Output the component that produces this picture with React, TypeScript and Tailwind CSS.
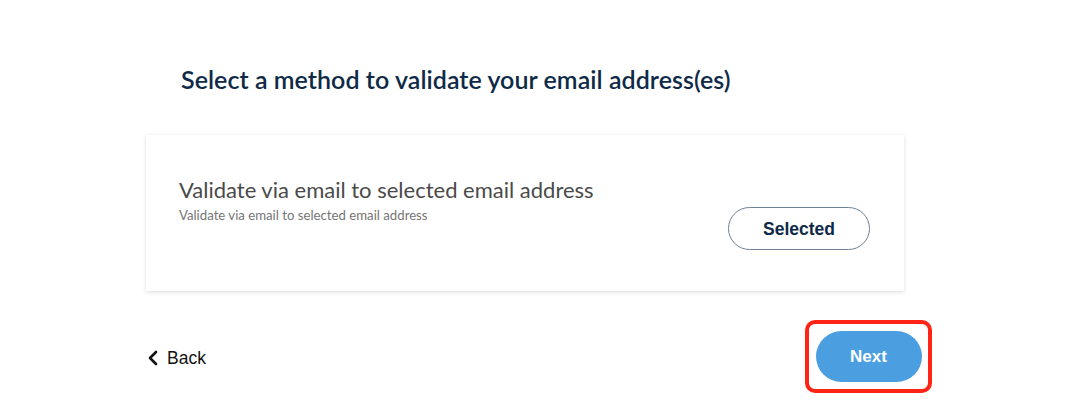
import React from "react";

export default function App() {
  return (
    <div className="w-[1076px] h-[412px] bg-white overflow-hidden" style={{ fontFamily: "Lato, sans-serif" }}>
      <div className="ml-[146px] w-[786px]">
        <h1 className="pt-[63px] pl-[35px] text-[25px] leading-[32px] font-semibold text-[#0e2a47] tracking-[0.05px]" style={{ fontFamily: "Lato, sans-serif" }}>
          Select a method to validate your email address(es)
        </h1>
        <div className="mt-[40px] w-[758px] h-[156px] bg-white shadow-[0_1px_4px_rgba(0,0,0,0.14)] flex items-start justify-between pl-[33px] pr-[34px]">
          <div className="pt-[40px]">
            <div className="text-[22px] leading-[29px] text-[#4a4a4a]">Validate via email to selected email address</div>
            <div className="text-[13.2px] leading-[16px] text-[#757575] mt-[3px]">Validate via email to selected email address</div>
          </div>
          <button
            className="mt-[72px] w-[142px] h-[43px] rounded-full border border-[#6d8195] text-[17.5px] font-bold text-[#0e2a47] bg-white pt-[1px]"
            style={{ fontFamily: "'Liberation Sans', Arial, sans-serif" }}
          >
            Selected
          </button>
        </div>
        <div className="mt-[29px] flex items-center justify-between">
          <button className="flex items-center gap-[8px] pl-[1px] pt-[3px] text-[17.5px] text-[#111]" style={{ fontFamily: "'Liberation Sans', Arial, sans-serif" }}>
            <svg width="12" height="16" viewBox="0 0 12 16" fill="none">
              <path d="M9 2 L3 8 L9 14" stroke="#111" strokeWidth="2.6" strokeLinecap="round" strokeLinejoin="round" />
            </svg>
            <span>Back</span>
          </button>
          <div className="w-[127px] h-[73px] border-[4px] border-[#ff2416] rounded-[10px] flex items-center justify-center">
            <button
              className="w-[106px] h-[51px] rounded-[26px] bg-[#4b9fe1] text-white text-[17px] font-bold"
              style={{ fontFamily: "'Liberation Sans', Arial, sans-serif" }}
            >
              Next
            </button>
          </div>
        </div>
      </div>
    </div>
  );
}
